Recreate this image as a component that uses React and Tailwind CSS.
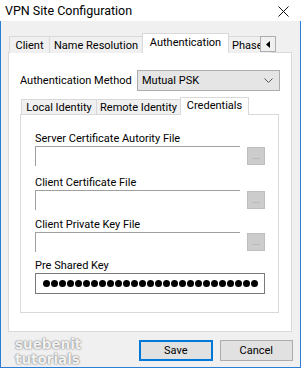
import React from "react";

export default function App() {
  const dots = Array.from({ length: 27 });
  return (
    <div
      className="w-[301px] h-[368px] bg-white flex flex-col text-[11px] text-black overflow-hidden whitespace-nowrap"
      style={{ fontFamily: 'Roboto, "Liberation Sans", sans-serif' }}
    >
      {/* Title bar */}
      <div className="h-[21px] bg-white flex items-center justify-between pl-[5px] pr-[12px] shrink-0">
        <span className="text-[12.5px] leading-none mt-[1px]">VPN Site Configuration</span>
        <svg width="11" height="11" viewBox="0 0 11 11" className="mt-[2px]">
          <path d="M0.5 0.5 L10.5 10.5 M10.5 0.5 L0.5 10.5" stroke="#111" strokeWidth="1" />
        </svg>
      </div>

      {/* Body */}
      <div className="flex-1 bg-[#f0f0f0] border-x border-b border-[#2b7fd3] flex flex-col px-[7px]">
        {/* Outer tabs */}
        <div className="flex items-end h-[32px] pt-[12px] relative">
          <div className="flex items-end ml-[1px] w-[262px] overflow-hidden h-[20px]">
            <div className="h-[17px] w-[41px] border border-b-0 border-[#d9d9d9] bg-[#f0f0f0] flex items-center justify-center leading-none shrink-0">
              Client
            </div>
            <div className="h-[17px] w-[93px] border border-l-0 border-b-0 border-[#d9d9d9] bg-[#f0f0f0] flex items-center justify-center leading-none shrink-0">
              Name Resolution
            </div>
            <div className="h-[20px] w-[87px] -ml-[1px] border border-b-0 border-[#d9d9d9] bg-white flex items-center justify-center leading-none shrink-0 relative z-10 pb-[2px]">
              Authentication
            </div>
            <div className="h-[17px] w-[44px] -ml-[1px] border border-b-0 border-[#d9d9d9] bg-[#f0f0f0] flex items-center pl-[3px] leading-none shrink-0">
              Phase 1
            </div>
          </div>
          <div className="absolute left-[252px] top-[15px] w-[16px] h-[16px] border border-[#adadad] bg-[#f0f0f0] flex items-center justify-center z-20">
            <svg width="4" height="7" viewBox="0 0 4 7">
              <path d="M4 0 L0 3.5 L4 7 Z" fill="#000" />
            </svg>
          </div>
        </div>

        {/* Outer panel */}
        <div className="-mt-[1px] w-[284px] h-[280px] bg-white border border-[#d9d9d9] flex flex-col px-[11px]">
          {/* Auth method */}
          <div className="flex items-center mt-[17px] h-[21px]">
            <span className="w-[117px] leading-none">Authentication Method</span>
            <div className="w-[143px] h-[21px] bg-[#e5e5e5] border border-[#acacac] flex items-center justify-between pl-[4px] pr-[6px]">
              <span className="leading-none">Mutual PSK</span>
              <svg width="9" height="5" viewBox="0 0 9 5">
                <path d="M0.5 0.5 L4.5 4.5 L8.5 0.5" stroke="#555" strokeWidth="1" fill="none" />
              </svg>
            </div>
          </div>

          {/* Inner tabs */}
          <div className="flex items-end h-[17px] mt-[6px] ml-[1px]">
            <div className="h-[15px] w-[76px] border border-b-0 border-[#d9d9d9] bg-[#f0f0f0] flex items-center justify-center leading-none">
              Local Identity
            </div>
            <div className="h-[15px] w-[84px] border border-l-0 border-b-0 border-[#d9d9d9] bg-[#f0f0f0] flex items-center justify-center leading-none">
              Remote Identity
            </div>
            <div className="h-[18px] w-[69px] -ml-[1px] border border-b-0 border-[#d9d9d9] bg-white flex items-center justify-center leading-none relative z-10 -mb-[1px] pb-[2px]">
              Credentials
            </div>
          </div>

          {/* Inner panel */}
          <div className="w-[259px] h-[199px] border border-[#d9d9d9] bg-white flex flex-col pl-[14px]">
            <div className="h-[16px] mt-[15px] flex items-center leading-none">Server Certificate Autority File</div>
            <div className="flex items-start">
              <div className="w-[205px] h-[20px] border-t border-l border-[#a0a0a0]" />
              <Browse />
            </div>
            <div className="h-[16px] mt-[8px] flex items-center leading-none">Client Certificate File</div>
            <div className="flex items-start">
              <div className="w-[205px] h-[20px] border-t border-l border-[#a0a0a0]" />
              <Browse />
            </div>
            <div className="h-[16px] mt-[6px] flex items-center leading-none">Client Private Key File</div>
            <div className="flex items-start">
              <div className="w-[205px] h-[20px] border-t border-l border-[#a0a0a0]" />
              <Browse />
            </div>
            <div className="h-[16px] mt-[5px] flex items-center leading-none">Pre Shared Key</div>
            <div className="w-[230px] h-[21px] border border-[#7a7a7a] flex items-center pl-[7px] gap-[1px]">
              {dots.map((_, i) => (
                <span key={i} className="block w-[7px] h-[7px] rounded-full bg-black shrink-0" />
              ))}
            </div>
          </div>
        </div>

        {/* Bottom row */}
        <div className="flex items-start mt-[8px] relative">
          <div
            className="absolute left-[7px] top-[-3px] flex flex-col text-[#f2f2f2] font-bold text-[13.5px] leading-[15px] [text-shadow:0_0_2px_#7d7d7d,0_0_1px_#8a8a8a]"
            style={{ fontFamily: '"DejaVu Sans", sans-serif' }}
          >
            <span>suebenit</span>
            <span>tutorials</span>
          </div>
          <div className="ml-[131px] w-[74px] h-[21px] bg-[#e1e1e1] border-2 border-[#0078d7] flex items-center justify-center leading-none">
            Save
          </div>
          <div className="ml-[7px] w-[74px] h-[21px] bg-[#e1e1e1] border border-[#adadad] flex items-center justify-center leading-none">
            Cancel
          </div>
        </div>
      </div>
    </div>
  );
}

function Browse() {
  return (
    <div className="ml-[7px] mt-[1px] w-[18px] h-[18px] bg-[#cccccc] border border-[#bfbfbf] flex items-end justify-center pb-[3px]">
      <span className="text-[#8d8d8d] text-[9px] leading-none">...</span>
    </div>
  );
}
